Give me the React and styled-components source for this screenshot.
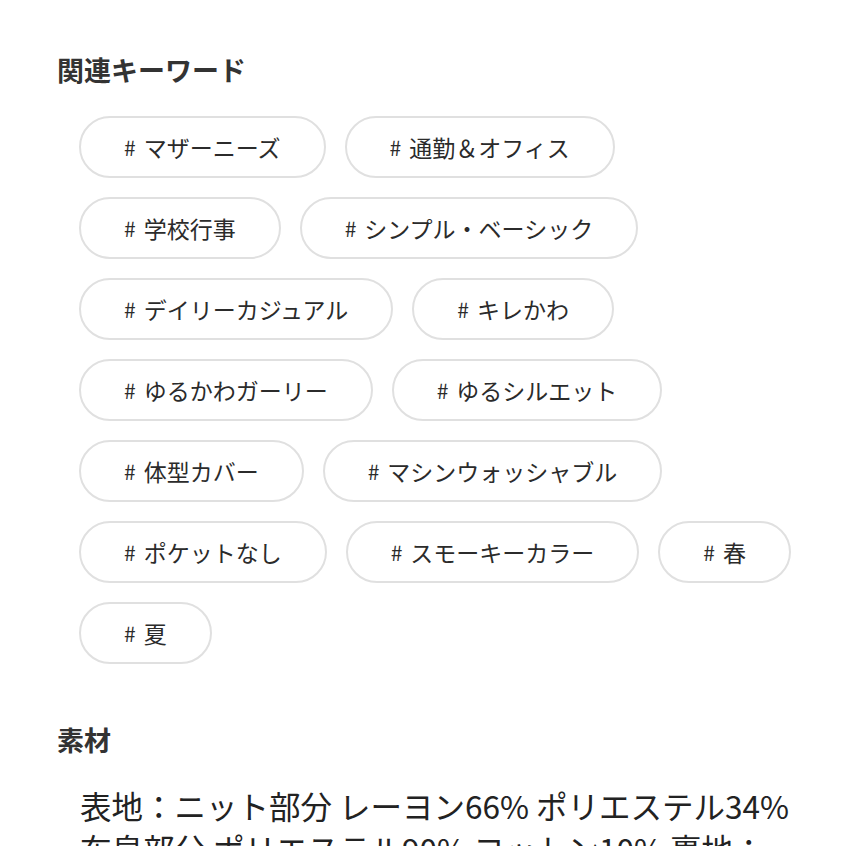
import React from 'react';
import styled, { createGlobalStyle } from 'styled-components';

const GlobalStyle = createGlobalStyle`
  body {
    margin: 0;
    background: #fff;
    font-family: 'Noto Sans CJK JP', 'Noto Sans', sans-serif;
    color: #333;
  }
`;

const keywords = [
  'マザーニーズ',
  '通勤＆オフィス',
  '学校行事',
  'シンプル・ベーシック',
  'デイリーカジュアル',
  'キレかわ',
  'ゆるかわガーリー',
  'ゆるシルエット',
  '体型カバー',
  'マシンウォッシャブル',
  'ポケットなし',
  'スモーキーカラー',
  '春',
  '夏'
];

const Page = styled.div`
  width: 846px;
  height: 846px;
  overflow: hidden;
  padding: 56px 0 0 57px;
  box-sizing: border-box;
`;

const Heading = styled.h2`
  margin: 0;
  font-size: 27px;
  font-weight: 700;
  line-height: 27px;
  color: #333;
`;

const Tags = styled.div`
  display: flex;
  flex-wrap: wrap;
  gap: 19px;
  width: 730px;
  margin: 33px 0 0 22px;
`;

const Tag = styled.div`
  height: 62px;
  box-sizing: border-box;
  display: flex;
  align-items: center;
  padding: 0 43px;
  border: 2px solid #e0e0e0;
  border-radius: 31px;
  font-size: 23px;
  color: #2b2b2b;
  white-space: nowrap;
`;

const Hash = styled.span`
  font-size: 21px;
  margin-right: 8px;
`;

const Section = styled.div`
  margin-top: 62px;
`;

const Body = styled.p`
  margin: 31px 0 0 23px;
  font-size: 31.5px;
  line-height: 43px;
  color: #222;
  white-space: nowrap;
`;

const App = () => (
  <Page>
    <GlobalStyle />
    <Heading>関連キーワード</Heading>
    <Tags>
      {keywords.map((k) => (
        <Tag key={k}>
          <Hash>#</Hash>
          {k}
        </Tag>
      ))}
    </Tags>
    <Section>
      <Heading>素材</Heading>
      <Body>
        表地：ニット部分 レーヨン66% ポリエステル34%
        <br />
        布帛部分 ポリエステル90% コットン10% 裏地：
      </Body>
    </Section>
  </Page>
);

export default App;
